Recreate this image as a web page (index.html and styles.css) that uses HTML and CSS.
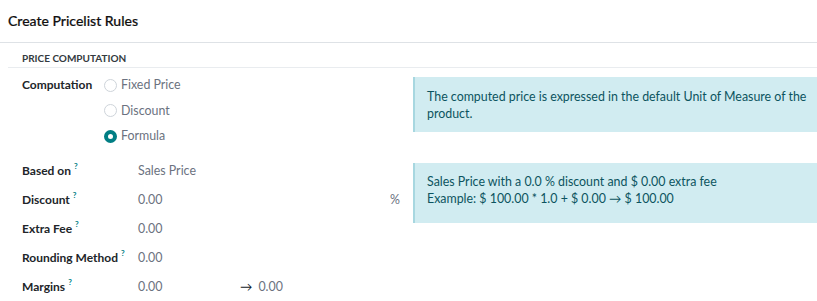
FILE: index.html
```html
<!DOCTYPE html>
<html>
<head>
<meta charset="utf-8">
<link rel="stylesheet" href="styles.css">
</head>
<body>
<div class="dialog">
  <header class="dlg-header">
    <h4 class="dlg-title">Create Pricelist Rules</h4>
  </header>
  <div class="dlg-body">
    <div class="sep">PRICE COMPUTATION</div>
    <div class="group">
      <div class="col-left">
        <div class="row row-comp">
          <div class="label">Computation</div>
          <div class="radios">
            <div class="radio"><span class="dot"></span><span class="rtext">Fixed Price</span></div>
            <div class="radio"><span class="dot"></span><span class="rtext">Discount</span></div>
            <div class="radio"><span class="dot checked"></span><span class="rtext">Formula</span></div>
          </div>
        </div>
      </div>
      <div class="col-right">
        <div class="alert alert-1">The computed price is expressed in the default Unit of Measure of the product.</div>
      </div>
    </div>
    <div class="group group-2">
      <div class="col-left">
        <div class="row"><div class="label">Based on<sup class="q">?</sup></div><div class="value">Sales Price</div></div>
        <div class="row"><div class="label">Discount<sup class="q">?</sup></div><div class="value value-wide"><span>0.00</span><span class="pct">%</span></div></div>
        <div class="row"><div class="label">Extra Fee<sup class="q">?</sup></div><div class="value">0.00</div></div>
        <div class="row"><div class="label">Rounding Method<sup class="q">?</sup></div><div class="value">0.00</div></div>
        <div class="row"><div class="label">Margins<sup class="q">?</sup></div><div class="value margins"><span class="m1">0.00</span><span class="arrow">&#x2192;</span><span>0.00</span></div></div>
      </div>
      <div class="col-right">
        <div class="alert alert-2">Sales Price with a 0.0 % discount and $ 0.00 extra fee<br>Example: $ 100.00 * 1.0 + $ 0.00 &#x2192; $ 100.00</div>
      </div>
    </div>
  </div>
</div>
</body>
</html>
```

FILE: styles.css
```css
html, body {
  margin: 0;
  padding: 0;
  background: #ffffff;
}
body {
  font-family: Lato, "Noto Sans", sans-serif;
  font-size: 12.4px;
  color: #374151;
  overflow: hidden;
}
.dialog {
  width: 817px;
}
.dlg-header {
  height: 42px;
  display: flex;
  align-items: center;
  padding-left: 8px;
  border-bottom: 1px solid #dee2e6;
}
.dlg-title {
  margin: 0;
  font-size: 14px;
  font-weight: 500;
  color: #111111;
  padding-bottom: 2px;
  -webkit-text-stroke: 0.2px #111111;
}
.dlg-body {
  padding-left: 8px;
}
.sep {
  margin-top: 8px;
  padding: 0 0 2px 14px;
  font-size: 10px;
  font-weight: 700;
  color: #343a40;
  border-bottom: 1px solid #e9ecef;
  line-height: 14px;
}
.group {
  display: flex;
}
.col-left {
  width: 397px;
  flex: none;
}
.col-right {
  flex: 1;
  padding-left: 8px;
}
.row {
  display: flex;
  height: 29px;
  align-items: center;
}
.row-comp {
  height: auto;
  align-items: flex-start;
  padding-top: 9px;
}
.label {
  width: 130px;
  padding-left: 14px;
  box-sizing: border-box;
  font-size: 12px;
  font-weight: 700;
  color: #212529;
  flex: none;
  white-space: nowrap;
}
.row-comp .label {
  width: 96px;
  line-height: 16px;
}
.q {
  color: #017e84;
  font-size: 8px;
  font-weight: 700;
  margin-left: 3px;
  vertical-align: 6px;
  line-height: 0;
}
.radios {
  display: flex;
  flex-direction: column;
  gap: 9.5px;
}
.radio {
  display: flex;
  align-items: center;
  line-height: 16px;
  color: #6b7280;
}
.dot {
  width: 13px;
  height: 13px;
  border: 1px solid #ced4da;
  border-radius: 50%;
  box-sizing: border-box;
  margin-right: 4px;
  flex: none;
}
.dot.checked {
  border: 4px solid #017e84;
  background: #fff;
}
.value {
  color: #6b7280;
}
.value-wide {
  display: flex;
  width: 262px;
  justify-content: space-between;
}
.margins {
  display: flex;
  align-items: center;
}
.m1 {
  width: 102px;
}
.arrow {
  color: #111827;
  margin-right: 6px;
}
.alert {
  background: #d1ecf1;
  border-left: 2px solid #a7d7e0;
  color: #0c5460;
  line-height: 17px;
  box-sizing: border-box;
}
.alert-1 {
  margin-top: 9px;
  padding: 11px 0 13px 12px;
  height: 55px;
}
.group-2 {
  margin-top: 12px;
}
.alert-2 {
  margin-top: 7px;
  padding: 10px 12px;
  height: 60px;
}
```
